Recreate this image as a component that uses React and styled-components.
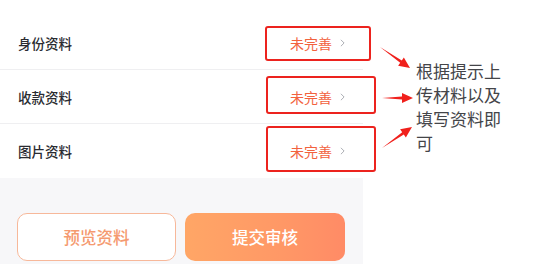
import React from "react";
import styled, { createGlobalStyle } from "styled-components";

const GlobalStyle = createGlobalStyle`
  body {
    margin: 0;
    background: #ffffff;
    font-family: "Noto Sans CJK SC", "Noto Sans", sans-serif;
  }
`;

const rows = [
  { label: "身份资料", box: { left: 265, top: 26, width: 106, height: 35 } },
  { label: "收款资料", box: { left: 266, top: 76, width: 110, height: 38 } },
  { label: "图片资料", box: { left: 266, top: 126, width: 110, height: 46 } },
];

const App = () => {
  return (
    <Page>
      <GlobalStyle />
      <Panel>
        <List>
          {rows.map((row) => (
            <Row key={row.label}>
              <Label>{row.label}</Label>
              <Status>
                未完善
                <Chevron viewBox="0 0 6 10">
                  <polyline points="1,1 5,5 1,9" />
                </Chevron>
              </Status>
            </Row>
          ))}
        </List>
        <Footer>
          <GhostButton>预览资料</GhostButton>
          <MainButton>提交审核</MainButton>
        </Footer>
      </Panel>
      <Aside>
        <Note>根据提示上传材料以及填写资料即可</Note>
      </Aside>

      {rows.map((row) => (
        <Mark
          key={row.label + "-mark"}
          style={{
            left: row.box.left,
            top: row.box.top,
            width: row.box.width,
            height: row.box.height,
          }}
        />
      ))}
      <Arrows viewBox="0 0 545 264">
        <Arrow x1={380} y1={47} x2={410} y2={68} />
        <Arrow x1={382} y1={98} x2={413} y2={98} />
        <Arrow x1={382} y1={148} x2={412} y2={127} />
      </Arrows>
    </Page>
  );
};

const Arrow = ({ x1, y1, x2, y2 }) => {
  const dx = x2 - x1;
  const dy = y2 - y1;
  const len = Math.sqrt(dx * dx + dy * dy);
  const ux = dx / len;
  const uy = dy / len;
  const px = -uy;
  const py = ux;
  const head = 11;
  const bx = x2 - ux * head;
  const by = y2 - uy * head;
  const pts = [
    [x1, y1],
    [bx + px * 1.4, by + py * 1.4],
    [bx + px * 5, by + py * 5],
    [x2, y2],
    [bx - px * 5, by - py * 5],
    [bx - px * 1.4, by - py * 1.4],
  ]
    .map((p) => p.join(","))
    .join(" ");
  return <polygon points={pts} fill="#f0201c" />;
};

const Page = styled.div`
  position: relative;
  display: flex;
  width: 545px;
  height: 264px;
  overflow: hidden;
`;

const Panel = styled.div`
  width: 363px;
  display: flex;
  flex-direction: column;
`;

const List = styled.div`
  padding-top: 16px;
  background: #ffffff;
`;

const Row = styled.div`
  height: 54px;
  display: flex;
  align-items: center;
  justify-content: space-between;
  padding: 0 0 0 18px;
  border-bottom: 1px solid #efeff1;
  box-sizing: border-box;

  &:last-child {
    border-bottom: none;
  }
`;

const Label = styled.span`
  font-size: 13.5px;
  font-weight: 500;
  color: #2a2b31;
`;

const Status = styled.span`
  display: flex;
  align-items: center;
  gap: 8px;
  margin-right: 18px;
  font-size: 14px;
  color: #f2623e;
`;

const Chevron = styled.svg`
  width: 5px;
  height: 8px;
  fill: none;
  stroke: #a9abb2;
  stroke-width: 1.2;
`;

const Footer = styled.div`
  flex: 1;
  display: flex;
  gap: 9px;
  padding: 35px 0 0 17px;
  background: #f7f7f9;
`;

const ButtonBase = styled.button`
  width: 159px;
  height: 48px;
  border-radius: 10px;
  font-family: "Noto Sans CJK SC", sans-serif;
  font-size: 16.5px;
  font-weight: 500;
  box-sizing: border-box;
`;

const GhostButton = styled(ButtonBase)`
  background: #ffffff;
  border: 1px solid #f7b89a;
  color: #f59a70;
`;

const MainButton = styled(ButtonBase)`
  width: 160px;
  border: none;
  color: #ffffff;
  background: linear-gradient(90deg, #ffa666 0%, #ff9866 60%, #ff8b66 100%);
`;

const Aside = styled.div`
  flex: 1;
  padding: 59px 0 0 53px;
`;

const Note = styled.p`
  margin: 0;
  width: 88px;
  font-size: 17px;
  line-height: 24px;
  color: #444549;
`;

const Mark = styled.div`
  position: absolute;
  border: 2px solid #ec231e;
  border-radius: 3px;
  box-sizing: border-box;
`;

const Arrows = styled.svg`
  position: absolute;
  left: 0;
  top: 0;
  width: 545px;
  height: 264px;
  pointer-events: none;
`;

export default App;
